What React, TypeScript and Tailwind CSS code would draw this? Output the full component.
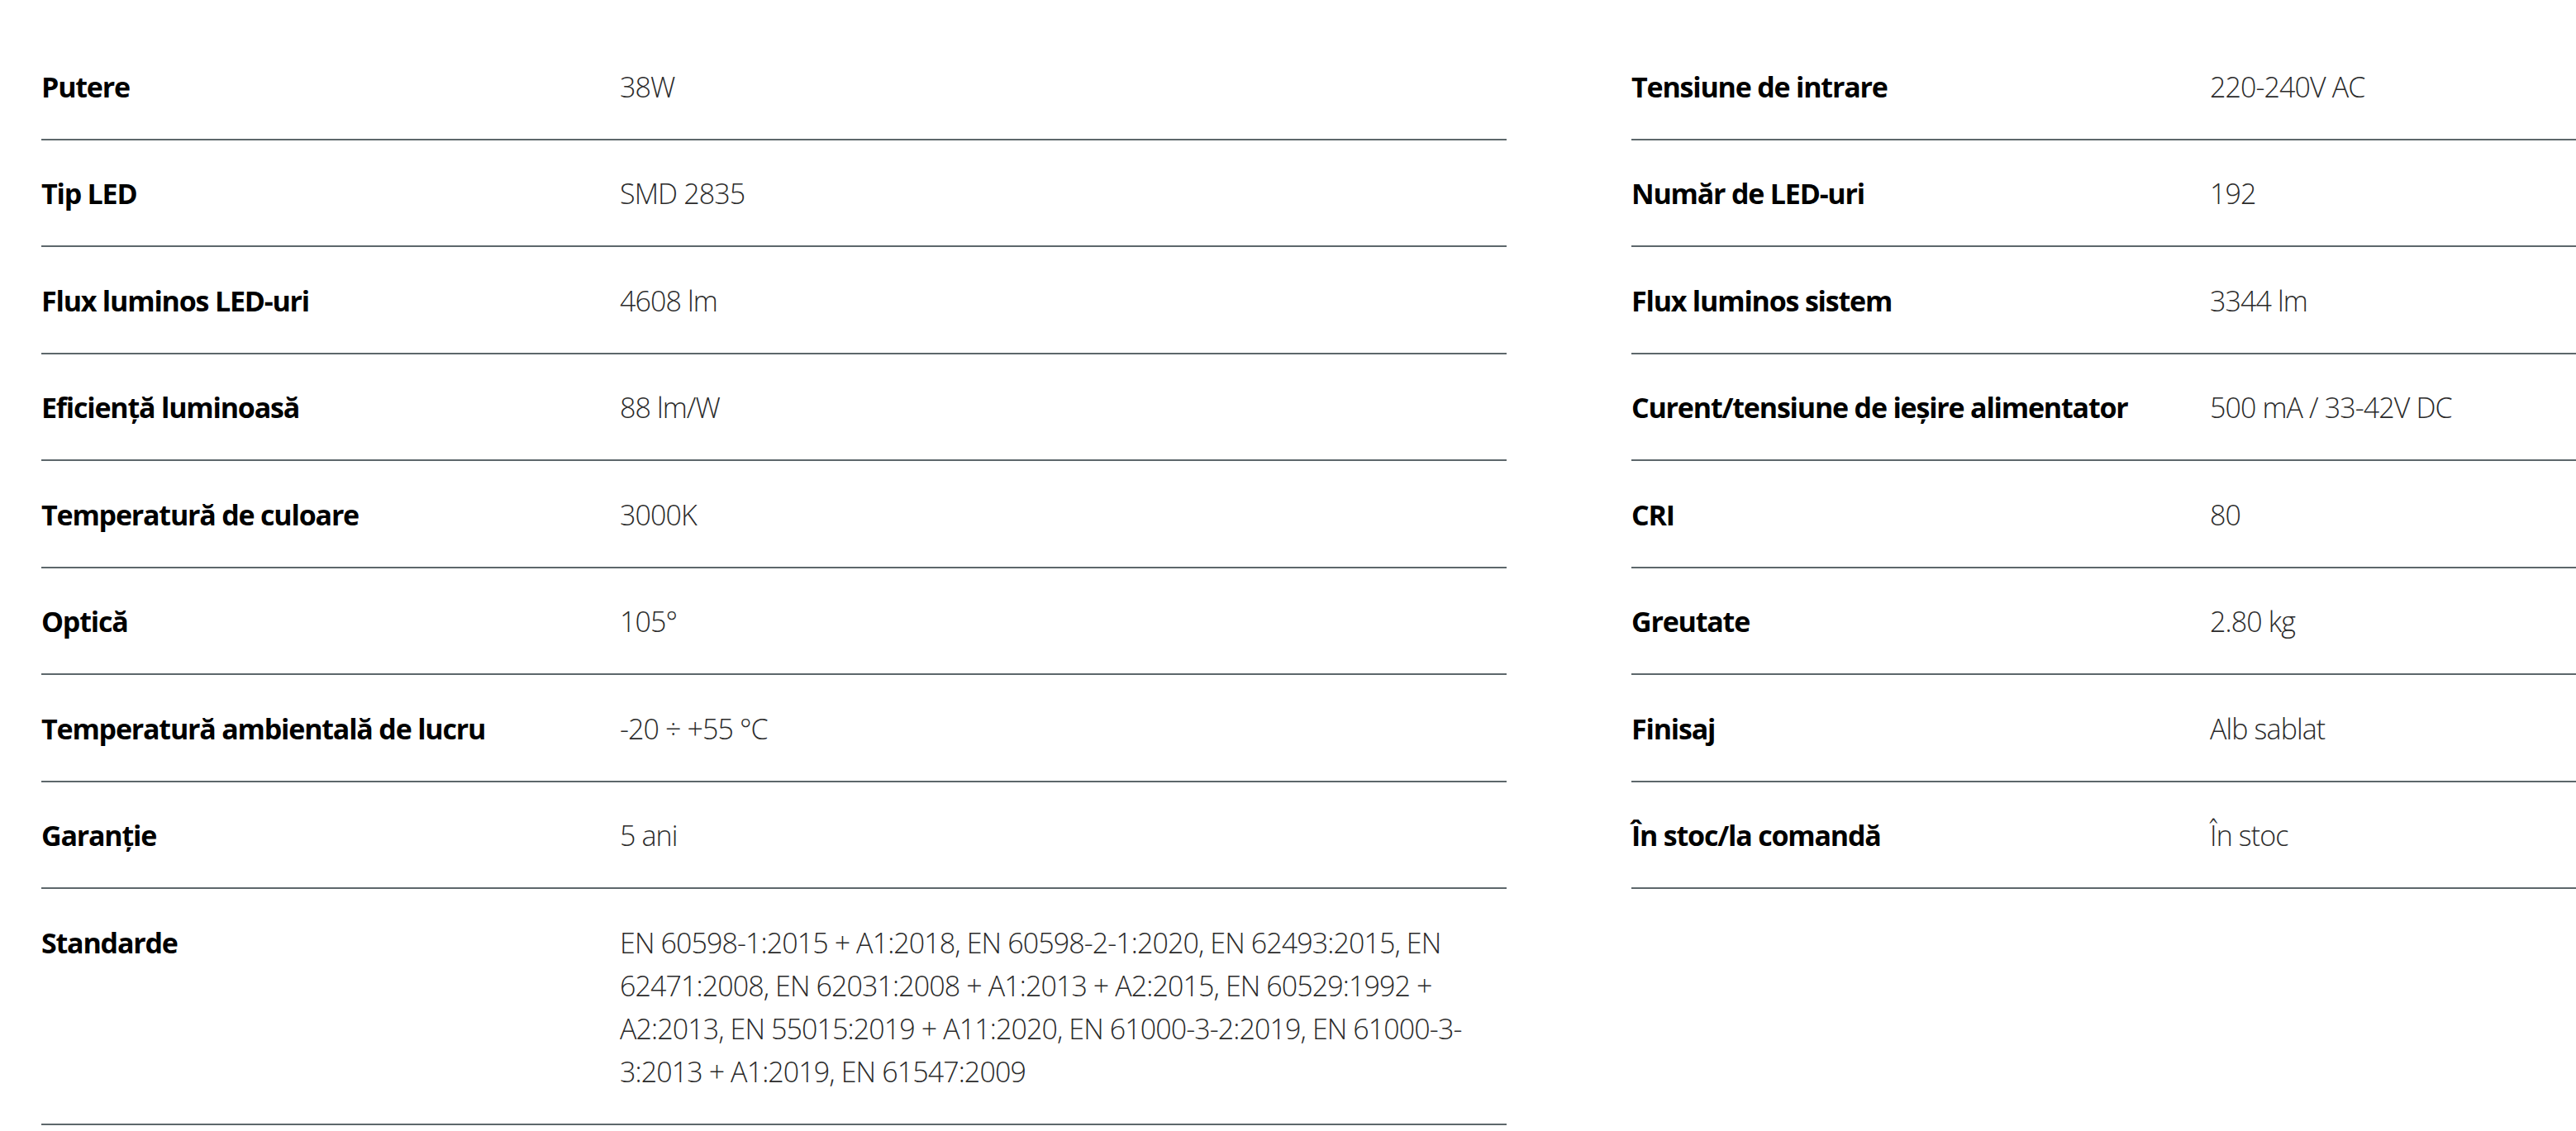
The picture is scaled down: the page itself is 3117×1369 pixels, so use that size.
const leftSpecs = [
  { label: 'Putere', value: '38W' },
  { label: 'Tip LED', value: 'SMD 2835' },
  { label: 'Flux luminos LED-uri', value: '4608 lm' },
  { label: 'Eficiență luminoasă', value: '88 lm/W' },
  { label: 'Temperatură de culoare', value: '3000K' },
  { label: 'Optică', value: '105°' },
  { label: 'Temperatură ambientală de lucru', value: '-20 ÷ +55 °C' },
  { label: 'Garanție', value: '5 ani' },
  {
    label: 'Standarde',
    value:
      'EN 60598-1:2015 + A1:2018, EN 60598-2-1:2020, EN 62493:2015, EN 62471:2008, EN 62031:2008 + A1:2013 + A2:2015, EN 60529:1992 + A2:2013, EN 55015:2019 + A11:2020, EN 61000-3-2:2019, EN 61000-3-3:2013 + A1:2019, EN 61547:2009',
  },
]

const rightSpecs = [
  { label: 'Tensiune de intrare', value: '220-240V AC' },
  { label: 'Număr de LED-uri', value: '192' },
  { label: 'Flux luminos sistem', value: '3344 lm' },
  { label: 'Curent/tensiune de ieșire alimentator', value: '500 mA / 33-42V DC' },
  { label: 'CRI', value: '80' },
  { label: 'Greutate', value: '2.80 kg' },
  { label: 'Finisaj', value: 'Alb sablat' },
  { label: 'În stoc/la comandă', value: 'În stoc' },
]

function SpecRow({ label, value }: { label: string; value: string }) {
  return (
    <div className="flex border-b-2 border-[#5d676b] pt-[38.5px] pb-[37px] leading-[52px]">
      <div className="w-[700px] shrink-0 font-bold text-black tracking-[-1.2px]">{label}</div>
      <div className="flex-1 min-w-0 font-light text-[#2b2b2b] tracking-[-0.9px]">{value}</div>
    </div>
  )
}

export default function App() {
  return (
    <div
      className="min-h-screen w-full overflow-hidden bg-white text-[34px]"
      style={{ fontFamily: '"Open Sans", "Noto Sans", sans-serif' }}
    >
      <div className="flex gap-[151px] pl-[50px] pt-[40px]">
        {/* Left column */}
        <div className="w-[1773px] shrink-0">
          {leftSpecs.map((s, i) => (
            <SpecRow key={i} label={s.label} value={s.value} />
          ))}
        </div>

        {/* Right column */}
        <div className="flex-1 min-w-0">
          {rightSpecs.map((s, i) => (
            <SpecRow key={i} label={s.label} value={s.value} />
          ))}
        </div>
      </div>
    </div>
  )
}
